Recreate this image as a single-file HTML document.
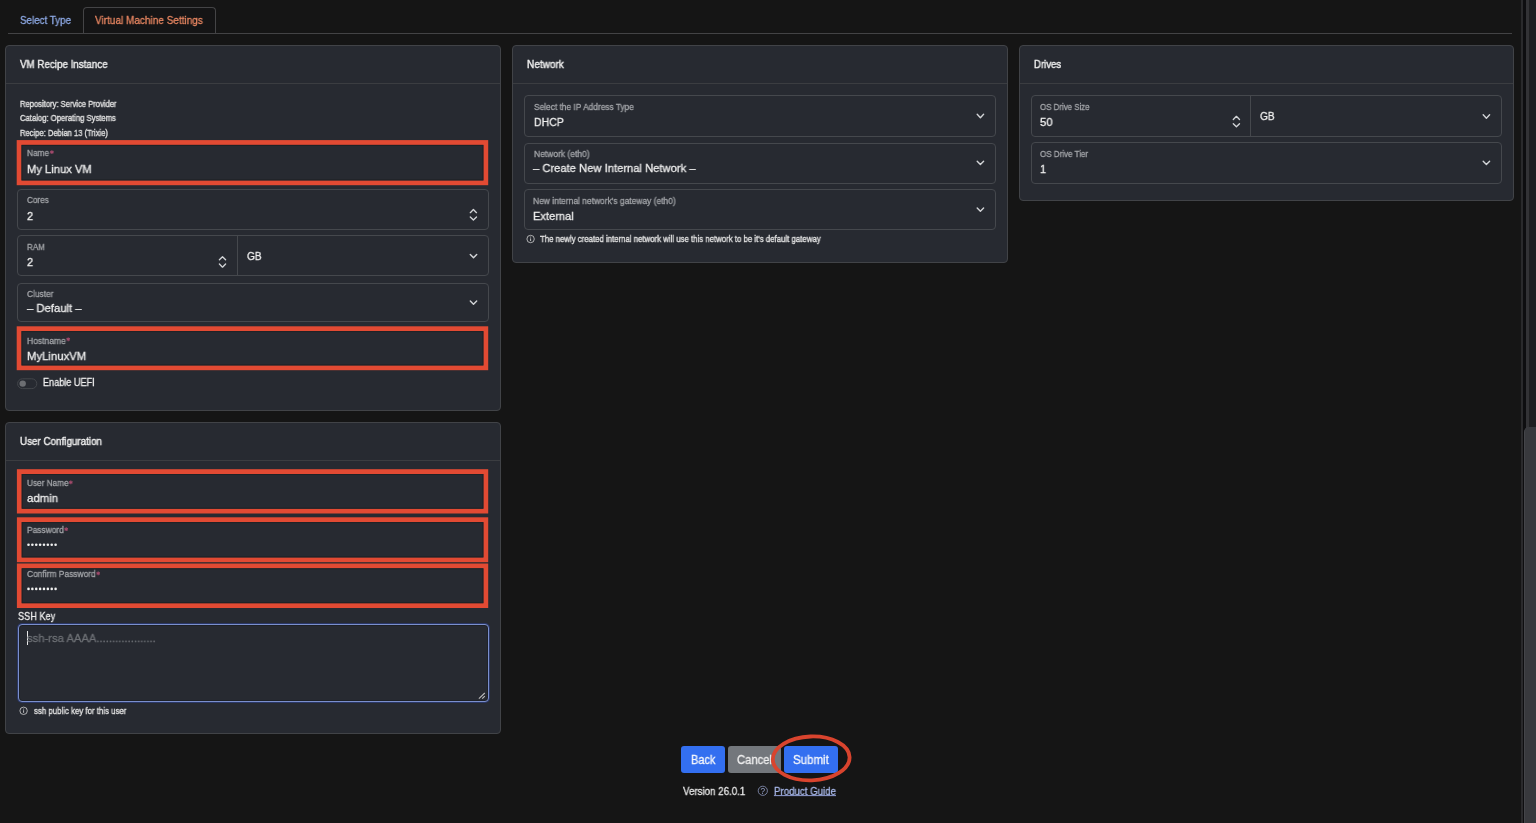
<!DOCTYPE html>
<html><head><meta charset="utf-8"><style>
html,body{margin:0;padding:0;}
body{width:1536px;height:823px;overflow:hidden;background:#151515;position:relative;font-family:"Liberation Sans",sans-serif;}
.t{position:absolute;white-space:pre;line-height:1;transform-origin:0 0;-webkit-text-stroke:0.3px currentColor;will-change:transform;}
svg{position:absolute;left:0;top:0;}
</style></head><body>
<div style="position:absolute;left:8.00px;top:33.00px;width:1504.00px;height:1.00px;box-sizing:border-box;background:#434345"></div>
<div style="position:absolute;left:83.00px;top:7.00px;width:132.50px;height:26.00px;box-sizing:border-box;border:1px solid #444446;border-bottom:none;border-radius:4px 4px 0 0;background:#141415"></div>
<div style="position:absolute;left:5.00px;top:45.00px;width:496.00px;height:366.00px;box-sizing:border-box;background:#272a31;border:1px solid #414347;border-radius:4px"></div>
<div style="position:absolute;left:6.00px;top:83.00px;width:494.00px;height:1.00px;box-sizing:border-box;background:#3b3d41"></div>
<div style="position:absolute;left:5.00px;top:422.00px;width:496.00px;height:312.00px;box-sizing:border-box;background:#272a31;border:1px solid #414347;border-radius:4px"></div>
<div style="position:absolute;left:6.00px;top:460.00px;width:494.00px;height:1.00px;box-sizing:border-box;background:#3b3d41"></div>
<div style="position:absolute;left:512.00px;top:45.00px;width:496.00px;height:218.00px;box-sizing:border-box;background:#272a31;border:1px solid #414347;border-radius:4px"></div>
<div style="position:absolute;left:513.00px;top:83.00px;width:494.00px;height:1.00px;box-sizing:border-box;background:#3b3d41"></div>
<div style="position:absolute;left:1019.00px;top:45.00px;width:495.00px;height:156.00px;box-sizing:border-box;background:#272a31;border:1px solid #414347;border-radius:4px"></div>
<div style="position:absolute;left:1020.00px;top:83.00px;width:493.00px;height:1.00px;box-sizing:border-box;background:#3b3d41"></div>
<div style="position:absolute;left:18.70px;top:142.10px;width:467.50px;height:41.10px;box-sizing:border-box;background:#272a31"></div>
<div style="position:absolute;left:17.00px;top:189.00px;width:472.00px;height:41.00px;box-sizing:border-box;background:#272a31;border:1px solid #45484d;border-radius:4px"></div>
<div style="position:absolute;left:17.00px;top:235.00px;width:472.00px;height:41.00px;box-sizing:border-box;background:#272a31;border:1px solid #45484d;border-radius:4px"></div>
<div style="position:absolute;left:237.00px;top:236.00px;width:1.00px;height:39.00px;box-sizing:border-box;background:#45484d"></div>
<div style="position:absolute;left:17.00px;top:282.60px;width:472.00px;height:39.40px;box-sizing:border-box;background:#272a31;border:1px solid #45484d;border-radius:4px"></div>
<div style="position:absolute;left:18.70px;top:328.30px;width:467.50px;height:39.90px;box-sizing:border-box;background:#272a31"></div>
<div style="position:absolute;left:18.90px;top:471.20px;width:467.30px;height:40.30px;box-sizing:border-box;background:#272a31"></div>
<div style="position:absolute;left:18.90px;top:519.30px;width:467.30px;height:40.90px;box-sizing:border-box;background:#272a31"></div>
<div style="position:absolute;left:18.90px;top:565.50px;width:467.30px;height:40.50px;box-sizing:border-box;background:#272a31"></div>
<div style="position:absolute;left:524.00px;top:95.00px;width:472.00px;height:42.00px;box-sizing:border-box;background:#272a31;border:1px solid #45484d;border-radius:4px"></div>
<div style="position:absolute;left:524.00px;top:143.00px;width:472.00px;height:41.00px;box-sizing:border-box;background:#272a31;border:1px solid #45484d;border-radius:4px"></div>
<div style="position:absolute;left:524.00px;top:189.00px;width:472.00px;height:41.00px;box-sizing:border-box;background:#272a31;border:1px solid #45484d;border-radius:4px"></div>
<div style="position:absolute;left:1031.00px;top:95.00px;width:471.00px;height:42.00px;box-sizing:border-box;background:#272a31;border:1px solid #45484d;border-radius:4px"></div>
<div style="position:absolute;left:1250.00px;top:96.00px;width:1.00px;height:40.00px;box-sizing:border-box;background:#45484d"></div>
<div style="position:absolute;left:1031.00px;top:142.00px;width:471.00px;height:42.00px;box-sizing:border-box;background:#272a31;border:1px solid #45484d;border-radius:4px"></div>
<div style="position:absolute;left:18.00px;top:624.00px;width:471.00px;height:78.00px;box-sizing:border-box;background:#272a31;border:1px solid #7b8fcc;border-radius:4px;box-shadow:0 0 0 1px #2a3766, inset 0 0 0 1px #1e2127"></div>
<div style="position:absolute;left:26.60px;top:630.50px;width:1.20px;height:14.50px;box-sizing:border-box;background:#e8e8e8"></div>
<div style="position:absolute;left:681.20px;top:746.00px;width:43.60px;height:26.80px;box-sizing:border-box;background:#336ff0;border-radius:3px"></div>
<div style="position:absolute;left:727.60px;top:746.00px;width:53.60px;height:26.80px;box-sizing:border-box;background:#73777c;border-radius:3px"></div>
<div style="position:absolute;left:783.50px;top:746.00px;width:54.60px;height:26.80px;box-sizing:border-box;background:#336ff0;border-radius:3px"></div>
<div style="position:absolute;left:1521.00px;top:0.00px;width:15.00px;height:823.00px;box-sizing:border-box;background:#161618"></div>
<div style="position:absolute;left:1521.20px;top:0.00px;width:2.00px;height:823.00px;box-sizing:border-box;background:#2a2a2c"></div>
<div style="position:absolute;left:1523.20px;top:0.00px;width:2.80px;height:823.00px;box-sizing:border-box;background:#0e0e10"></div>
<div style="position:absolute;left:1526.00px;top:0.00px;width:2.50px;height:823.00px;box-sizing:border-box;background:#333336"></div>
<div style="position:absolute;left:1528.50px;top:0.00px;width:7.50px;height:823.00px;box-sizing:border-box;background:#1f1f21"></div>
<div style="position:absolute;left:1523.50px;top:427.00px;width:16.50px;height:403.00px;box-sizing:border-box;background:#38393d;border-radius:5px 0 0 0;border-left:1px solid #444549"></div>
<svg width="1536" height="823" viewBox="0 0 1536 823"><rect x="19.10" y="142.50" width="466.70" height="40.30" fill="none" stroke="#e24a33" stroke-width="4.8"/>
<rect x="22.00" y="145.40" width="460.90" height="34.50" fill="none" stroke="#1f2226" stroke-width="1"/>
<rect x="19.10" y="328.70" width="466.70" height="39.10" fill="none" stroke="#e24a33" stroke-width="4.8"/>
<rect x="22.00" y="331.60" width="460.90" height="33.30" fill="none" stroke="#1f2226" stroke-width="1"/>
<rect x="19.30" y="471.60" width="466.50" height="39.50" fill="none" stroke="#e24a33" stroke-width="4.8"/>
<rect x="22.20" y="474.50" width="460.70" height="33.70" fill="none" stroke="#1f2226" stroke-width="1"/>
<rect x="19.30" y="519.70" width="466.50" height="40.10" fill="none" stroke="#e24a33" stroke-width="4.8"/>
<rect x="22.20" y="522.60" width="460.70" height="34.30" fill="none" stroke="#1f2226" stroke-width="1"/>
<rect x="19.30" y="565.90" width="466.50" height="39.70" fill="none" stroke="#e24a33" stroke-width="4.8"/>
<rect x="22.20" y="568.80" width="460.70" height="33.90" fill="none" stroke="#1f2226" stroke-width="1"/>
<polyline points="470.30,212.65 473.40,209.55 476.50,212.65" fill="none" stroke="#d2d4d7" stroke-width="1.35" stroke-linecap="round" stroke-linejoin="round"/>
<polyline points="470.30,216.95 473.40,220.05 476.50,216.95" fill="none" stroke="#d2d4d7" stroke-width="1.35" stroke-linecap="round" stroke-linejoin="round"/>
<polyline points="219.40,259.75 222.50,256.65 225.60,259.75" fill="none" stroke="#d2d4d7" stroke-width="1.35" stroke-linecap="round" stroke-linejoin="round"/>
<polyline points="219.40,264.05 222.50,267.15 225.60,264.05" fill="none" stroke="#d2d4d7" stroke-width="1.35" stroke-linecap="round" stroke-linejoin="round"/>
<polyline points="1233.30,119.45 1236.40,116.35 1239.50,119.45" fill="none" stroke="#d2d4d7" stroke-width="1.35" stroke-linecap="round" stroke-linejoin="round"/>
<polyline points="1233.30,123.75 1236.40,126.85 1239.50,123.75" fill="none" stroke="#d2d4d7" stroke-width="1.35" stroke-linecap="round" stroke-linejoin="round"/>
<polyline points="470.30,254.40 473.50,257.70 476.70,254.40" fill="none" stroke="#d2d4d7" stroke-width="1.4" stroke-linecap="round" stroke-linejoin="round"/>
<polyline points="470.30,301.05 473.50,304.35 476.70,301.05" fill="none" stroke="#d2d4d7" stroke-width="1.4" stroke-linecap="round" stroke-linejoin="round"/>
<polyline points="977.20,114.35 980.40,117.65 983.60,114.35" fill="none" stroke="#d2d4d7" stroke-width="1.4" stroke-linecap="round" stroke-linejoin="round"/>
<polyline points="977.20,161.25 980.40,164.55 983.60,161.25" fill="none" stroke="#d2d4d7" stroke-width="1.4" stroke-linecap="round" stroke-linejoin="round"/>
<polyline points="977.20,207.95 980.40,211.25 983.60,207.95" fill="none" stroke="#d2d4d7" stroke-width="1.4" stroke-linecap="round" stroke-linejoin="round"/>
<polyline points="1483.20,114.85 1486.40,118.15 1489.60,114.85" fill="none" stroke="#d2d4d7" stroke-width="1.4" stroke-linecap="round" stroke-linejoin="round"/>
<polyline points="1483.20,161.25 1486.40,164.55 1489.60,161.25" fill="none" stroke="#d2d4d7" stroke-width="1.4" stroke-linecap="round" stroke-linejoin="round"/>
<circle cx="23.6" cy="710.8" r="3.7" fill="none" stroke="#cfcfcf" stroke-width="0.8"/>
<line x1="23.6" y1="710.1999999999999" x2="23.6" y2="712.8" stroke="#cfcfcf" stroke-width="0.9"/>
<circle cx="23.6" cy="708.9" r="0.5" fill="#cfcfcf"/>
<circle cx="530.6" cy="239.0" r="3.7" fill="none" stroke="#cfcfcf" stroke-width="0.8"/>
<line x1="530.6" y1="238.4" x2="530.6" y2="241.0" stroke="#cfcfcf" stroke-width="0.9"/>
<circle cx="530.6" cy="237.1" r="0.5" fill="#cfcfcf"/>
<line x1="478.9" y1="698.6" x2="484.8" y2="693.0" stroke="#bdbdbd" stroke-width="1.1"/>
<line x1="482.2" y1="698.6" x2="484.8" y2="696.1" stroke="#bdbdbd" stroke-width="1.1"/>
<circle cx="28.50" cy="544.8" r="1.3" fill="#f0f0f0"/>
<circle cx="32.37" cy="544.8" r="1.3" fill="#f0f0f0"/>
<circle cx="36.24" cy="544.8" r="1.3" fill="#f0f0f0"/>
<circle cx="40.11" cy="544.8" r="1.3" fill="#f0f0f0"/>
<circle cx="43.98" cy="544.8" r="1.3" fill="#f0f0f0"/>
<circle cx="47.85" cy="544.8" r="1.3" fill="#f0f0f0"/>
<circle cx="51.72" cy="544.8" r="1.3" fill="#f0f0f0"/>
<circle cx="55.59" cy="544.8" r="1.3" fill="#f0f0f0"/>
<circle cx="28.50" cy="588.9" r="1.3" fill="#f0f0f0"/>
<circle cx="32.37" cy="588.9" r="1.3" fill="#f0f0f0"/>
<circle cx="36.24" cy="588.9" r="1.3" fill="#f0f0f0"/>
<circle cx="40.11" cy="588.9" r="1.3" fill="#f0f0f0"/>
<circle cx="43.98" cy="588.9" r="1.3" fill="#f0f0f0"/>
<circle cx="47.85" cy="588.9" r="1.3" fill="#f0f0f0"/>
<circle cx="51.72" cy="588.9" r="1.3" fill="#f0f0f0"/>
<circle cx="55.59" cy="588.9" r="1.3" fill="#f0f0f0"/>
<rect x="17.6" y="378.8" width="19.2" height="9.8" rx="4.9" fill="none" stroke="#43464b" stroke-width="1"/>
<circle cx="22.7" cy="383.6" r="3.2" fill="#6c6e72"/>
<line x1="51.90" y1="150.20" x2="51.90" y2="154.00" stroke="#a34a6c" stroke-width="1.1"/>
<line x1="50.25" y1="151.15" x2="53.55" y2="153.05" stroke="#a34a6c" stroke-width="1.1"/>
<line x1="53.55" y1="151.15" x2="50.25" y2="153.05" stroke="#a34a6c" stroke-width="1.1"/>
<line x1="70.80" y1="480.50" x2="70.80" y2="484.30" stroke="#a34a6c" stroke-width="1.1"/>
<line x1="69.15" y1="481.45" x2="72.45" y2="483.35" stroke="#a34a6c" stroke-width="1.1"/>
<line x1="72.45" y1="481.45" x2="69.15" y2="483.35" stroke="#a34a6c" stroke-width="1.1"/>
<line x1="66.20" y1="527.30" x2="66.20" y2="531.10" stroke="#a34a6c" stroke-width="1.1"/>
<line x1="64.55" y1="528.25" x2="67.85" y2="530.15" stroke="#a34a6c" stroke-width="1.1"/>
<line x1="67.85" y1="528.25" x2="64.55" y2="530.15" stroke="#a34a6c" stroke-width="1.1"/>
<line x1="98.20" y1="571.50" x2="98.20" y2="575.30" stroke="#a34a6c" stroke-width="1.1"/>
<line x1="96.55" y1="572.45" x2="99.85" y2="574.35" stroke="#a34a6c" stroke-width="1.1"/>
<line x1="99.85" y1="572.45" x2="96.55" y2="574.35" stroke="#a34a6c" stroke-width="1.1"/>
<line x1="68.20" y1="337.40" x2="68.20" y2="341.20" stroke="#a34a6c" stroke-width="1.1"/>
<line x1="66.55" y1="338.35" x2="69.85" y2="340.25" stroke="#a34a6c" stroke-width="1.1"/>
<line x1="69.85" y1="338.35" x2="66.55" y2="340.25" stroke="#a34a6c" stroke-width="1.1"/></svg>
<div class="t" style="left:20.00px;top:14.70px;font-size:11.0px;color:#8eaae6;transform:scaleX(0.8903);">Select Type</div>
<div class="t" style="left:95.40px;top:14.70px;font-size:11.0px;color:#e98762;transform:scaleX(0.9103);">Virtual Machine Settings</div>
<div class="t" style="left:19.90px;top:60.00px;font-size:10.3px;color:#eeeeee;transform:scaleX(0.9506);-webkit-text-stroke:0.4px currentColor;">VM Recipe Instance</div>
<div class="t" style="left:20.00px;top:437.20px;font-size:10.3px;color:#eeeeee;transform:scaleX(0.9551);-webkit-text-stroke:0.4px currentColor;">User Configuration</div>
<div class="t" style="left:526.80px;top:60.10px;font-size:10.3px;color:#eeeeee;transform:scaleX(0.9771);-webkit-text-stroke:0.4px currentColor;">Network</div>
<div class="t" style="left:1033.60px;top:60.30px;font-size:10.3px;color:#eeeeee;transform:scaleX(0.9319);-webkit-text-stroke:0.4px currentColor;">Drives</div>
<div class="t" style="left:20.20px;top:99.80px;font-size:8.3px;color:#e0e0e0;transform:scaleX(0.9178);-webkit-text-stroke:0.35px currentColor;">Repository: Service Provider</div>
<div class="t" style="left:20.20px;top:114.20px;font-size:8.3px;color:#e0e0e0;transform:scaleX(0.9242);-webkit-text-stroke:0.35px currentColor;">Catalog: Operating Systems</div>
<div class="t" style="left:20.20px;top:128.80px;font-size:8.3px;color:#e0e0e0;transform:scaleX(0.9149);-webkit-text-stroke:0.35px currentColor;">Recipe: Debian 13 (Trixie)</div>
<div class="t" style="left:26.90px;top:149.00px;font-size:8.9px;color:#a3a5a9;transform:scaleX(0.9319);">Name</div>
<div class="t" style="left:26.70px;top:196.00px;font-size:8.9px;color:#a3a5a9;transform:scaleX(0.9203);">Cores</div>
<div class="t" style="left:26.70px;top:242.80px;font-size:8.9px;color:#a3a5a9;transform:scaleX(0.9070);">RAM</div>
<div class="t" style="left:26.70px;top:290.10px;font-size:8.9px;color:#a3a5a9;transform:scaleX(0.9387);">Cluster</div>
<div class="t" style="left:26.70px;top:336.60px;font-size:8.9px;color:#a3a5a9;transform:scaleX(0.9591);">Hostname</div>
<div class="t" style="left:26.80px;top:479.10px;font-size:8.9px;color:#a3a5a9;transform:scaleX(0.9267);">User Name</div>
<div class="t" style="left:26.80px;top:526.20px;font-size:8.9px;color:#a3a5a9;transform:scaleX(0.9443);">Password</div>
<div class="t" style="left:26.80px;top:570.40px;font-size:8.9px;color:#a3a5a9;transform:scaleX(0.9476);">Confirm Password</div>
<div class="t" style="left:533.60px;top:102.80px;font-size:8.9px;color:#a3a5a9;transform:scaleX(0.9402);">Select the IP Address Type</div>
<div class="t" style="left:533.60px;top:150.00px;font-size:8.9px;color:#a3a5a9;transform:scaleX(0.9553);">Network (eth0)</div>
<div class="t" style="left:533.30px;top:196.60px;font-size:8.9px;color:#a3a5a9;transform:scaleX(0.9501);">New internal network's gateway (eth0)</div>
<div class="t" style="left:1040.20px;top:103.20px;font-size:8.9px;color:#a3a5a9;transform:scaleX(0.8899);">OS Drive Size</div>
<div class="t" style="left:1040.20px;top:150.10px;font-size:8.9px;color:#a3a5a9;transform:scaleX(0.9030);">OS Drive Tier</div>
<div class="t" style="left:26.90px;top:162.50px;font-size:11.7px;color:#ededed;transform:scaleX(0.9579);">My Linux VM</div>
<div class="t" style="left:26.70px;top:209.50px;font-size:11.7px;color:#ededed;transform:scaleX(0.9398);">2</div>
<div class="t" style="left:26.70px;top:256.30px;font-size:11.7px;color:#ededed;transform:scaleX(0.9398);">2</div>
<div class="t" style="left:246.70px;top:250.30px;font-size:11.7px;color:#ededed;transform:scaleX(0.8644);">GB</div>
<div class="t" style="left:26.70px;top:302.40px;font-size:11.7px;color:#ededed;transform:scaleX(0.9641);">– Default –</div>
<div class="t" style="left:26.70px;top:349.90px;font-size:11.7px;color:#ededed;transform:scaleX(0.9695);">MyLinuxVM</div>
<div class="t" style="left:26.80px;top:492.40px;font-size:11.7px;color:#ededed;transform:scaleX(0.9798);">admin</div>
<div class="t" style="left:533.60px;top:116.30px;font-size:11.7px;color:#ededed;transform:scaleX(0.8996);">DHCP</div>
<div class="t" style="left:533.30px;top:162.40px;font-size:11.7px;color:#ededed;transform:scaleX(0.9590);">– Create New Internal Network –</div>
<div class="t" style="left:533.30px;top:209.80px;font-size:11.7px;color:#ededed;transform:scaleX(0.9489);">External</div>
<div class="t" style="left:1040.20px;top:116.30px;font-size:11.7px;color:#ededed;transform:scaleX(0.9681);">50</div>
<div class="t" style="left:1259.70px;top:110.10px;font-size:11.7px;color:#ededed;transform:scaleX(0.8644);">GB</div>
<div class="t" style="left:1040.20px;top:163.20px;font-size:11.7px;color:#ededed;transform:scaleX(0.9398);">1</div>
<div class="t" style="left:42.60px;top:378.00px;font-size:10.2px;color:#ededed;transform:scaleX(0.8933);">Enable UEFI</div>
<div class="t" style="left:17.50px;top:610.70px;font-size:10.6px;color:#ededed;transform:scaleX(0.8654);">SSH Key</div>
<div class="t" style="left:26.70px;top:632.00px;font-size:11.7px;color:#6d7075;transform:scaleX(0.9627);">ssh-rsa AAAA...................</div>
<div class="t" style="left:33.50px;top:706.80px;font-size:9.0px;color:#e2e2e2;transform:scaleX(0.8713);-webkit-text-stroke:0.35px currentColor;">ssh public key for this user</div>
<div class="t" style="left:540.40px;top:235.00px;font-size:9.0px;color:#e2e2e2;transform:scaleX(0.8677);-webkit-text-stroke:0.35px currentColor;">The newly created internal network will use this network to be it's default gateway</div>
<div class="t" style="left:690.80px;top:754.70px;font-size:11.9px;color:#f4f6fb;transform:scaleX(0.9229);">Back</div>
<div class="t" style="left:737.40px;top:754.70px;font-size:11.9px;color:#eeeeee;transform:scaleX(0.9450);">Cancel</div>
<div class="t" style="left:792.50px;top:754.70px;font-size:11.9px;color:#f4f6fb;transform:scaleX(0.9672);">Submit</div>
<div class="t" style="left:683.20px;top:785.80px;font-size:10.9px;color:#e6e6e6;transform:scaleX(0.8946);">Version 26.0.1</div>
<div class="t" style="left:773.90px;top:785.50px;font-size:10.9px;color:#a7b7e8;transform:scaleX(0.8905);">Product Guide</div>
<svg width="1536" height="823" viewBox="0 0 1536 823"><circle cx="762.8" cy="790.8" r="4.6" fill="none" stroke="#8089ab" stroke-width="0.9"/>
<text x="762.9" y="794.1" text-anchor="middle" font-family="Liberation Sans" font-size="8.2" fill="#9aa6d0">?</text>
<rect x="773.9" y="795.1" width="62.1" height="1" fill="#8f9dd2"/>
<ellipse cx="811.2" cy="758.4" rx="38.4" ry="21.9" fill="none" stroke="#d9442e" stroke-width="3.8" transform="rotate(-2 811.2 758.4)"/></svg>

</body></html>
